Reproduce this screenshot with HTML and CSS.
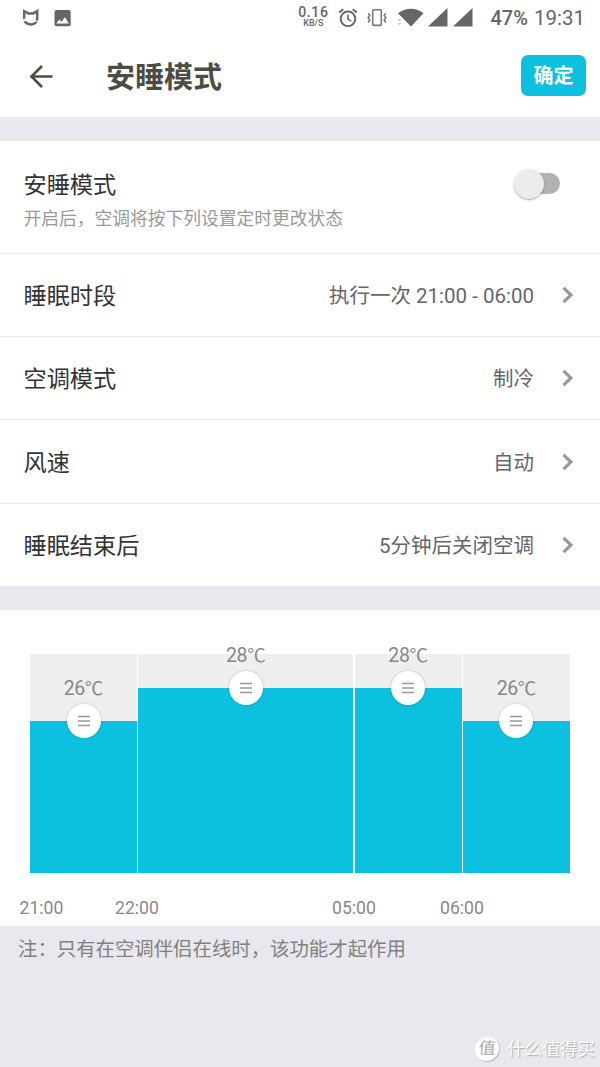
FILE: index.html
```html
<!DOCTYPE html>
<html lang="zh-CN">
<head>
<meta charset="utf-8">
<title>安睡模式</title>
<link rel="stylesheet" href="styles.css">
</head>
<body>
<div class="statusbar">
  <svg class="status-mi" width="18" height="18" viewBox="0 0 18 18"><path d="M2.200 11V2.200L6.500 4.400h4.600L15.200 2.200V9.500C15.200 13.300 12.600 15.400 9 15.400C6.300 15.400 4 14.400 2.600 12.400" fill="none" stroke="#666" stroke-width="2.500"/><path d="M0 11.300l5-2M11.800 11.200l5 1.600" stroke="#fff" stroke-width="1.100"/></svg>
  <svg class="status-pic" width="17" height="17" viewBox="0 0 17 17"><rect x=".5" y="0" width="16.200" height="16.200" rx="2" fill="#666"/><path d="M2.200 13.500L5.500 9.400l2 2.300L11 7.200l3.900 6.300z" fill="#fff"/></svg>
  <div class="spacer"></div>
  <div class="speed"><span class="speed-num">0.16</span><span class="speed-unit">KB/S</span></div>
  <svg class="status-alarm" width="20" height="20" viewBox="0 0 20 20" fill="none" stroke="#666"><circle cx="10" cy="10.800" r="7.300" stroke-width="1.900"/><path d="M10 6.600V11.100l3.200 2" stroke-width="1.600"/><path d="M1.200 4.600L5.300 1.200M18.800 4.600L14.700 1.200" stroke-width="1.900"/></svg>
  <svg class="status-vibrate" width="20" height="20" viewBox="0 0 20 20" fill="none" stroke="#777" stroke-width="1.600"><rect x="5.700" y="1.800" width="8.600" height="15.600" rx="1"/><path d="M1.200 5.200l1.600 2-1.600 2.400 1.600 2.400-1.600 2.500M18.800 5.200l-1.600 2 1.600 2.400-1.600 2.400 1.600 2.500"/></svg>
  <svg class="status-wifi" width="28" height="20" viewBox="0 0 28 20"><path d="M1 5.200Q14-3.500 26.500 5.200L14 18.500z" fill="#666"/><path d="M.5 13l2-2.400 2 2.400zM.5 15l2 2.400 2-2.400z" fill="#ccc"/></svg>
  <svg class="status-signal" width="20" height="20" viewBox="0 0 20 20"><path d="M0 18.500L19.500 0V18.500z" fill="#666"/></svg>
  <svg class="status-signal signal-two" width="20" height="20" viewBox="0 0 20 20"><path d="M0 18.500L19.500 0V18.500z" fill="#666"/></svg>
  <span class="battery">47%</span>
  <span class="clock">19:31</span>
</div>
<header class="header">
  <svg class="back" width="26" height="26" viewBox="0 0 26 26" fill="none" stroke="#4d4c43" stroke-width="2.600"><path d="M24.500 12.500H3.500M14 2L3.500 12.500L14 23"/></svg>
  <h1 class="title">安睡模式</h1>
  <button class="confirm">确定</button>
</header>
<main>
  <section class="settings">
    <div class="row row-switch">
      <div class="switch-text">
        <div class="label">安睡模式</div>
        <div class="hint">开启后，空调将按下列设置定时更改状态</div>
      </div>
      <div class="switch"><div class="thumb"></div></div>
    </div>
    <div class="row"><span class="label">睡眠时段</span><span class="value">执行一次 21:00 - 06:00</span><svg class="chevron" width="12" height="18" viewBox="0 0 12 18"><path d="M1.500 1.800L9 9l-7.500 7.200"/></svg></div>
    <div class="row"><span class="label">空调模式</span><span class="value">制冷</span><svg class="chevron" width="12" height="18" viewBox="0 0 12 18"><path d="M1.500 1.800L9 9l-7.500 7.200"/></svg></div>
    <div class="row row-tall"><span class="label">风速</span><span class="value">自动</span><svg class="chevron" width="12" height="18" viewBox="0 0 12 18"><path d="M1.500 1.800L9 9l-7.500 7.200"/></svg></div>
    <div class="row row-last"><span class="label">睡眠结束后</span><span class="value">5分钟后关闭空调</span><svg class="chevron" width="12" height="18" viewBox="0 0 12 18"><path d="M1.500 1.800L9 9l-7.500 7.200"/></svg></div>
  </section>
  <section class="schedule">
    <div class="chart">
      <div class="slot"><div class="fill cool"><span class="temp">26<span class="unit">℃</span></span><span class="handle"><svg width="12" height="12" viewBox="0 0 12 12"><path d="M0 1.500h12M0 6h12M0 10.500h12"/></svg></span></div></div>
      <div class="slot"><div class="fill warm"><span class="temp">28<span class="unit">℃</span></span><span class="handle"><svg width="12" height="12" viewBox="0 0 12 12"><path d="M0 1.500h12M0 6h12M0 10.500h12"/></svg></span></div></div>
      <div class="slot"><div class="fill warm"><span class="temp">28<span class="unit">℃</span></span><span class="handle"><svg width="12" height="12" viewBox="0 0 12 12"><path d="M0 1.500h12M0 6h12M0 10.500h12"/></svg></span></div></div>
      <div class="slot"><div class="fill cool"><span class="temp">26<span class="unit">℃</span></span><span class="handle"><svg width="12" height="12" viewBox="0 0 12 12"><path d="M0 1.500h12M0 6h12M0 10.500h12"/></svg></span></div></div>
    </div>
    <div class="times"><span>21:00</span><span>22:00</span><span>05:00</span><span>06:00</span></div>
  </section>
  <p class="note">注：只有在空调伴侣在线时，该功能才起作用</p>
</main>
<footer class="watermark"><span class="badge">值</span><span class="site">什么值得买</span></footer>
</body>
</html>
```

FILE: styles.css
```css
* { box-sizing: border-box; }
body {
  margin: 0;
  height: 1067px;
  display: flex;
  flex-direction: column;
  background: #e8e8ee;
  font-family: Roboto, "Noto Sans CJK SC", sans-serif;
  overflow: hidden;
}
.statusbar {
  height: 36px;
  flex: none;
  display: flex;
  align-items: center;
  background: #fff;
  color: #666;
  padding: 0 15px 0 22px;
}
.status-pic { margin-left: 14px; }
.spacer { flex: 1; }
.speed {
  display: flex;
  flex-direction: column;
  align-items: center;
  font-weight: 500;
  margin: -3px 10px 0 0;
}
.speed-num { font-size: 14px; line-height: 14px; letter-spacing: .6px; }
.speed-unit { font-size: 9px; line-height: 9px; }
.status-vibrate { margin-left: 9px; }
.status-wifi { margin-left: 10px; }
.status-signal { margin-left: 3px; }
.signal-two { margin-left: 5px; }
.battery { font-size: 20px; font-weight: 500; margin-left: 17px; line-height: 37px; }
.clock { font-size: 20.500px; margin-left: 6px; line-height: 37px; }
.header {
  height: 81px;
  flex: none;
  display: flex;
  align-items: center;
  background: #fff;
  padding: 0 14px 0 28px;
}
.title {
  margin: 0 auto 0 52px;
  padding-top: 2px;
  font-size: 29px;
  line-height: 40px;
  font-weight: 700;
  color: #4d4c43;
}
.confirm {
  width: 65px;
  height: 41px;
  margin-bottom: 2px;
  border: 0;
  border-radius: 7px;
  padding: 0;
  background: #0bc1df;
  color: #fff;
  font: 700 20px/42px Roboto, "Noto Sans CJK SC", sans-serif;
}
.settings { margin-top: 24px; background: #fff; }
.row {
  height: 83px;
  display: flex;
  align-items: center;
  padding: 0 26px 0 23.500px;
  border-bottom: 1px solid #e9e9e9;
}
.row-switch { height: 113px; justify-content: space-between; padding-right: 40px; }
.row-tall { height: 84px; }
.row-last { height: 82px; border-bottom: 0; }
.label { font-size: 23.200px; line-height: 34px; padding-top: 2px; color: #333; }
.switch-text { padding-top: 4px; }
.hint { font-size: 17.750px; line-height: 26px; color: #999; margin-top: 4px; }
.value { margin-left: auto; padding-top: 2px; font-size: 20.500px; line-height: 30px; color: #666; }
.chevron {
  margin-left: 28px;
  fill: none;
  stroke: #999;
  stroke-width: 3.200;
}
.switch {
  width: 44px;
  height: 21px;
  margin-bottom: 27px;
  border-radius: 11px;
  background: #b2b2b2;
  display: flex;
  align-items: center;
}
.thumb {
  flex: none;
  width: 30px;
  height: 30px;
  margin-left: -2px;
  border-radius: 50%;
  background: #ececec;
  box-shadow: 0 1px 2px rgba(0, 0, 0, .35);
}
.schedule {
  height: 316px;
  margin-top: 24px;
  padding: 44px 0 0;
  background: #fff;
}
.chart {
  height: 219px;
  margin: 0 30px;
  display: grid;
  grid-template-columns: 107px 215px 107px 107px;
  justify-content: space-between;
}
.slot {
  background: #efefef;
  display: flex;
  align-items: flex-end;
}
.fill {
  width: 100%;
  background: #0bc1df;
  display: flex;
  flex-direction: column;
  align-items: center;
}
.cool { height: 152px; }
.warm { height: 185px; }
.temp {
  margin-top: -46px;
  font-size: 19.500px;
  line-height: 28px;
  letter-spacing: -.4px;
  color: #888;
}
.unit { font-size: 18.500px; letter-spacing: 0; }
.handle {
  width: 34px;
  height: 34px;
  margin-top: 1px;
  border-radius: 50%;
  background: #fff;
  box-shadow: 0 0 3px rgba(0, 0, 0, .2);
  display: flex;
  align-items: center;
  justify-content: center;
}
.handle path { fill: none; stroke: #999; stroke-width: 1.600; }
.times {
  display: grid;
  grid-template-columns: 95.500px 217px 108px 60px;
  margin: 23px 0 0 19.500px;
  font-size: 17.600px;
  line-height: 24px;
  color: #888;
}
.note {
  margin: 10px 18px 0;
  font-size: 19.400px;
  line-height: 28px;
  color: #808080;
}
.watermark {
  margin-top: auto;
  height: 36px;
  flex: none;
  display: flex;
  align-items: center;
  justify-content: flex-end;
  gap: 8px;
  padding-right: 5px;
  color: #fff;
  font-size: 17.600px;
  text-shadow: 1px 1px 1px #aaa;
}
.site { margin-top: -3px; }
.badge {
  width: 24px;
  height: 24px;
  border-radius: 50%;
  background: #fff;
  box-shadow: 1px 1px 1px #bbb;
  color: #aaa;
  font-size: 17px;
  line-height: 23px;
  text-align: center;
  text-shadow: none;
  transform: skewX(-4deg);
}
```
